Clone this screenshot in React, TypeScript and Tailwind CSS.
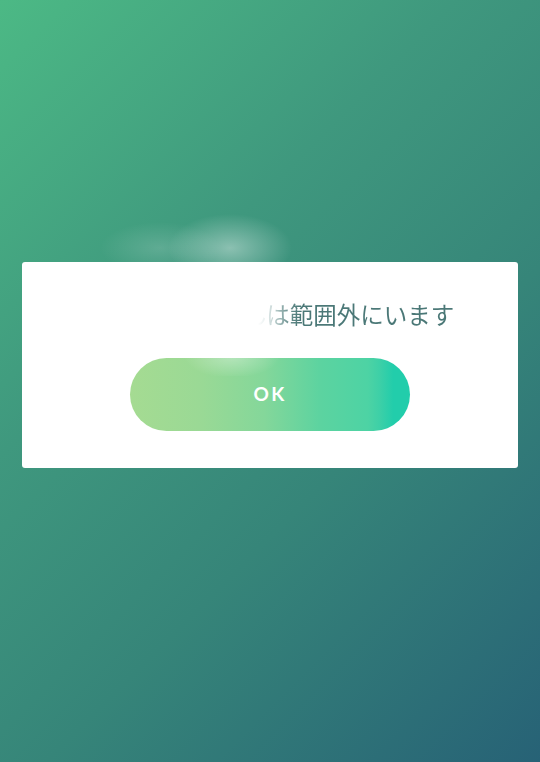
import React from "react";

export default function App() {
  return (
    <div className="relative w-[540px] h-[762px] overflow-hidden bg-[linear-gradient(135deg,#4cb985_0%,#3f987e_35%,#368579_62%,#276276_100%)] flex items-center justify-center">
      <div className="w-[496px] h-[206px] mb-[32px] bg-white rounded-[3px] flex flex-col items-center pt-[36px]">
        <p
          className="inline-block ml-[16px] h-[32px] leading-[32px] text-[23.5px] whitespace-nowrap text-transparent bg-clip-text bg-[linear-gradient(90deg,transparent_0px,transparent_156px,#e6eeee_164px,#a9c0bf_176px,#6f9392_186px,#4b7877_198px)]"
          style={{ fontFamily: '"Noto Sans CJK JP", "Noto Sans", sans-serif' }}
        >
          トレーナーさんは範囲外にいます
        </p>
        <button
          className="mt-[28px] w-[280px] h-[73px] rounded-full bg-[linear-gradient(90deg,#a5db92_0%,#9ad995_25%,#84d79a_48%,#5cd3a0_68%,#4dd3a4_85%,#3ed0a7_89%,#22cdab_94%,#22cdab_100%)] text-white text-[19px] font-bold tracking-[0.12em] flex items-center justify-center"
          style={{ fontFamily: 'Lato, "Open Sans", sans-serif' }}
        >
          OK
        </button>
      </div>
      <div className="pointer-events-none absolute left-[60px] top-[206px] w-[260px] h-[170px] bg-[radial-gradient(ellipse_62px_34px_at_170px_42px,rgba(255,255,255,0.4),rgba(255,255,255,0)),radial-gradient(ellipse_60px_26px_at_100px_42px,rgba(255,255,255,0.16),rgba(255,255,255,0)),radial-gradient(ellipse_48px_22px_at_172px_150px,rgba(255,255,255,0.35),rgba(255,255,255,0))]" />
    </div>
  );
}
